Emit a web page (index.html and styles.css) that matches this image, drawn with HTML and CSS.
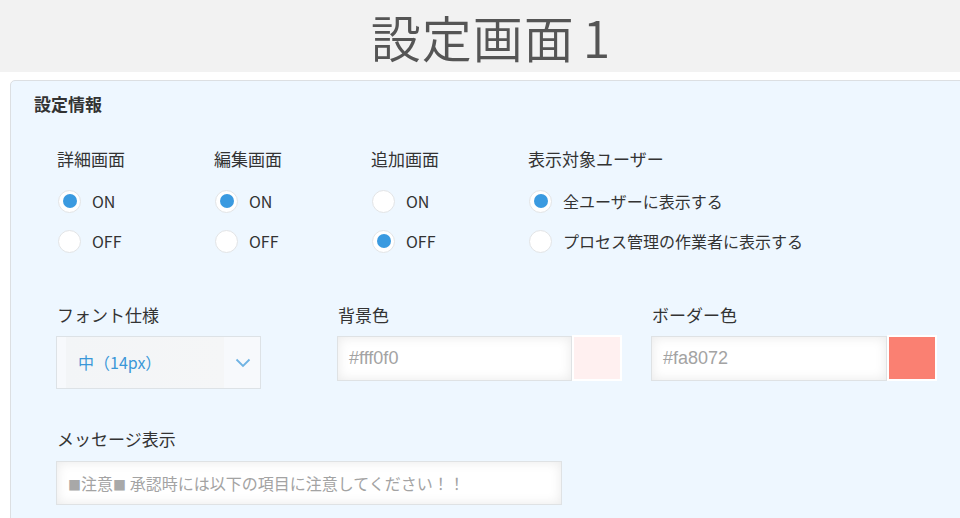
FILE: index.html
```html
<!DOCTYPE html>
<html lang="ja">
<head>
<meta charset="utf-8">
<title>設定画面1</title>
<link rel="stylesheet" href="styles.css">
</head>
<body>
<div class="page">
  <header class="header"><h1 class="title">設定画面<span class="num">1</span></h1></header>
  <section class="card">
    <h2 class="card-title">設定情報</h2>
    <div class="radio-row">
      <div class="group">
        <div class="label">詳細画面</div>
        <div class="opt"><span class="radio on"></span><span class="opt-text">ON</span></div>
        <div class="opt"><span class="radio"></span><span class="opt-text">OFF</span></div>
      </div>
      <div class="group">
        <div class="label">編集画面</div>
        <div class="opt"><span class="radio on"></span><span class="opt-text">ON</span></div>
        <div class="opt"><span class="radio"></span><span class="opt-text">OFF</span></div>
      </div>
      <div class="group">
        <div class="label">追加画面</div>
        <div class="opt"><span class="radio"></span><span class="opt-text">ON</span></div>
        <div class="opt"><span class="radio on"></span><span class="opt-text">OFF</span></div>
      </div>
      <div class="group wide">
        <div class="label">表示対象ユーザー</div>
        <div class="opt"><span class="radio on"></span><span class="opt-text">全ユーザーに表示する</span></div>
        <div class="opt"><span class="radio"></span><span class="opt-text">プロセス管理の作業者に表示する</span></div>
      </div>
    </div>
    <div class="field-row">
      <div class="field f-font">
        <div class="label">フォント仕様</div>
        <div class="select">
          <span class="select-inner">中（14px）</span>
          <svg class="chev" width="16" height="10" viewBox="0 0 16 10"><path d="M1.5 1.5 L8 8 L14.5 1.5" fill="none" stroke="#6fb3e3" stroke-width="1.8"/></svg>
        </div>
      </div>
      <div class="field f-bg">
        <div class="label">背景色</div>
        <div class="color-line">
          <div class="input latin w235">#fff0f0</div>
          <div class="swatch"><span class="swatch-fill sw-bg"></span></div>
        </div>
      </div>
      <div class="field f-border">
        <div class="label">ボーダー色</div>
        <div class="color-line">
          <div class="input latin w236">#fa8072</div>
          <div class="swatch"><span class="swatch-fill sw-border"></span></div>
        </div>
      </div>
    </div>
    <div class="field msg">
      <div class="label">メッセージ表示</div>
      <div class="input msg-input"><span class="sq">■</span>注意<span class="sq">■</span> 承認時には以下の項目に注意してください！！</div>
    </div>
  </section>
</div>
</body>
</html>
```

FILE: styles.css
```css
html, body {
  margin: 0;
  padding: 0;
  background: #ffffff;
  overflow: hidden;
}
body {
  font-family: "Noto Sans CJK JP", "Noto Sans", sans-serif;
  color: #333333;
}
.page {
  width: 982px;
}
.header {
  height: 72px;
  background: #f2f2f2;
  text-align: center;
}
.title {
  margin: 0;
  font-size: 50px;
  font-weight: 350;
  line-height: 72px;
  color: #555555;
  letter-spacing: 1px;
}
.num {
  margin-left: 8px;
}
.card {
  margin: 8px 10px 0;
  border: 1px solid #dcdfe2;
  border-radius: 5px;
  background: #eef7ff;
  padding: 11px 0 20px 23px;
  height: 460px;
}
.card-title {
  margin: 0;
  font-size: 17px;
  font-weight: 700;
  line-height: 24px;
  color: #333;
}
.radio-row {
  display: flex;
  margin: 30px 0 0 23px;
}
.group {
  width: 157px;
}
.group.wide {
  width: 300px;
}
.label {
  font-size: 17px;
  line-height: 26px;
  color: #333;
}
.opt {
  display: flex;
  align-items: center;
  height: 40px;
}
.group .label {
  margin-bottom: 9px;
}
.radio {
  box-sizing: border-box;
  width: 23px;
  height: 23px;
  margin-left: 1px;
  border: 1px solid #e2e4e6;
  border-radius: 50%;
  background: #ffffff;
  display: flex;
  align-items: center;
  justify-content: center;
}
.radio.on::after {
  content: "";
  width: 14px;
  height: 14px;
  border-radius: 50%;
  background: #3a9ae0;
}
.opt-text {
  margin-left: 11px;
  font-size: 16px;
  line-height: 22px;
  color: #333;
}
.field-row {
  display: flex;
  margin: 41px 0 0 22px;
}
.field .label {
  margin-left: 1px;
  margin-bottom: 8px;
}
.f-font { width: 281px; }
.f-bg { width: 314px; }
.select {
  box-sizing: border-box;
  width: 205px;
  height: 53px;
  border: 1px solid #dde2e6;
  background: #f7f9fc;
  display: flex;
  align-items: center;
  padding-left: 9px;
}
.select-inner {
  width: 146px;
  height: 51px;
  background: linear-gradient(90deg, #f3f5f7, #f5f6f7);
  padding-left: 12px;
  font-size: 16px;
  line-height: 51px;
  color: #3a97d8;
}
.chev {
  margin-left: 11px;
}
.color-line {
  display: flex;
}
.input {
  box-sizing: border-box;
  height: 45px;
  border: 1px solid #dfe2e4;
  background: #ffffff;
  box-shadow: inset 0 0 12px rgba(0, 0, 0, 0.09);
  padding-left: 11px;
  font-size: 16px;
  line-height: 43px;
  color: #a3a3a3;
  white-space: nowrap;
}
.input.latin {
  font-family: "Liberation Sans", "Noto Sans CJK JP", sans-serif;
  font-size: 18px;
}
.sq {
  font-size: 13px;
  color: #a8a8a8;
}
.w235 { width: 235px; }
.w236 { width: 236px; }
.swatch {
  box-sizing: border-box;
  width: 50px;
  height: 46px;
  margin-top: -1px;
  background: #ffffff;
  padding: 2px;
}
.swatch-fill {
  display: block;
  width: 100%;
  height: 100%;
}
.sw-bg { background: #fff0f0; }
.sw-border { background: #fa8072; }
.msg {
  margin: 37px 0 0 22px;
}
.msg .label {
  margin-bottom: 9px;
}
.msg-input {
  width: 506px;
  height: 44px;
  line-height: 42px;
}
```
